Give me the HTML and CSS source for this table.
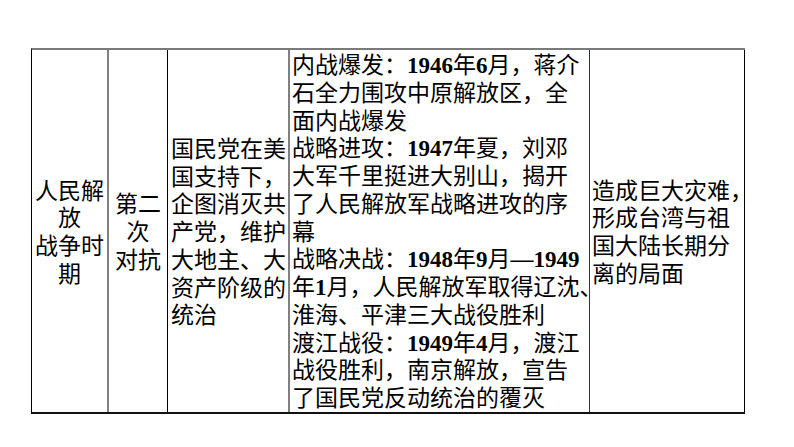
FILE: index.html
```html
<!DOCTYPE html>
<html lang="zh">
<head>
<meta charset="utf-8">
<link rel="stylesheet" href="styles.css">
</head>
<body>
<div class="tbl">
  <div class="cell c1 center">人民解<br>放<br>战争时<br>期</div>
  <div class="cell c2 center">第二<br>次<br>对抗</div>
  <div class="cell c3">国民党在美<br>国支持下，<br>企图消灭共<br>产党，维护<br>大地主、大<br>资产阶级的<br>统治</div>
  <div class="cell c4">
    <div>内战爆发：<b class="num">1946</b>年<b class="num">6</b>月，蒋介<br>石全力围攻中原解放区，全<br>面内战爆发</div>
    <div>战略进攻：<b class="num">1947</b>年夏，刘邓<br>大军千里挺进大别山，揭开<br>了人民解放军战略进攻的序<br>幕</div>
    <div>战略决战：<b class="num">1948</b>年<b class="num">9</b>月<b class="num">—1949</b><br>年<b class="num">1</b>月，人民解放军取得辽沈、<br>淮海、平津三大战役胜利</div>
    <div>渡江战役：<b class="num">1949</b>年<b class="num">4</b>月，渡江<br>战役胜利，南京解放，宣告<br>了国民党反动统治的覆灭</div>
  </div>
  <div class="cell c5">造成巨大灾难，<br>形成台湾与祖<br>国大陆长期分<br>离的局面</div>
</div>
</body>
</html>
```

FILE: styles.css
```css
html, body {
  margin: 0;
  padding: 0;
  background: #fff;
}

body {
  font-family: "Noto Sans CJK SC", "Noto Sans", sans-serif;
  color: #000;
}

.tbl {
  display: grid;
  grid-template-columns: 77px 59px 122px 300px 155px;
  width: 714px;
  margin: 48px 0 0 31px;
  border-top: 2px solid #7a7a7a;
  border-left: 1px solid #000;
  border-bottom: 2px solid #111;
  box-sizing: border-box;
}

.cell {
  box-sizing: border-box;
  font-size: 23px;
  line-height: 27.75px;
  white-space: nowrap;
  display: flex;
  flex-direction: column;
  justify-content: center;
}

.center {
  text-align: center;
  align-items: center;
}

.c1 {
  border-right: 2px solid #808080;
}

.c2 {
  border-right: 1px solid #000;
}

.c3 {
  border-right: 2px solid #808080;
  padding-left: 3px;
}

.c4 {
  border-right: 1px solid #333;
  padding: 0 0 0 2px;
  justify-content: flex-start;
  height: 362px;
}

.c5 {
  border-right: 1px solid #000;
  padding-left: 2px;
}

.num {
  font-family: "Liberation Serif", "Times New Roman", serif;
  font-weight: bold;
  line-height: 0;
}
```
